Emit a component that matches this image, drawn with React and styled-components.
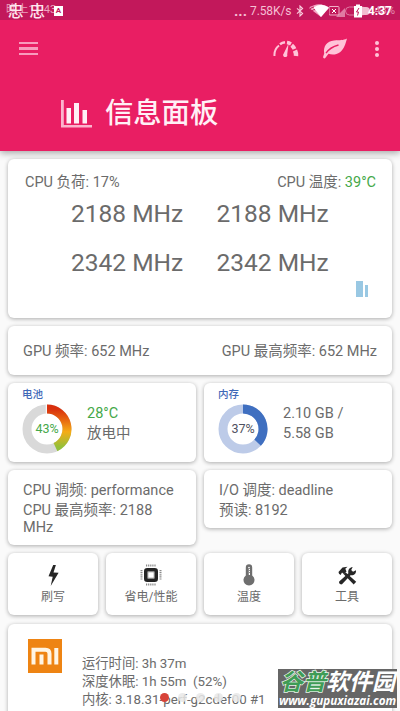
import React from 'react';
import styled, { createGlobalStyle } from 'styled-components';

const colors = {
  primary: '#e91e63',
  primaryDark: '#c2185b',
  page: '#fafafa',
  text: '#6b6b6b',
  green: '#45a849',
  blue: '#3f69b8',
  icon: '#ffc3d8',
};

const Bluetooth = () => (
  <svg width="8" height="12" viewBox="0 0 8 12" fill="none" stroke="#f9cfdf" strokeWidth="1.1">
    <path d="M1 3.3 6.6 8.4 4 11V1l2.6 2.5L1 8.7" />
  </svg>
);

const Wifi = () => (
  <svg width="20" height="13" viewBox="0 0 20 13">
    <path d="M0 4Q10-3.5 20 4L12 13Z" fill="#f4a6c3" />
    <path d="M4.5 3.5Q12-2 20 3.5L12 13Z" fill="#fff" />
    <path d="M1 5q2-2 4-2M3 7q1.500-1.500 3-1.500" stroke="#c2185b" fill="none" />
  </svg>
);

const Battery = () => (
  <svg width="42" height="14" viewBox="0 0 42 14">
    <path d="m7 13 9-9v9z" fill="#e07ba3" />
    <rect x="0" y="2.500" width="10" height="8.500" rx="1" fill="none" stroke="#f1b0c8" />
    <path d="m3 5 4 4m0-4L3 9" stroke="#fff" />
    <rect x="16.500" y="3" width="21" height="8" rx="4" fill="none" stroke="#df7aa2" />
    <path d="M33 3h4a4 4 0 0 1 0 8h-4z" fill="#f2bdd0" />
    <path d="M25 2h2V.500h4V2h2v11.500h-8z" fill="#fff" />
    <path d="m30 4-2.500 4h2l-1 3.500" stroke="#c2185b" fill="none" />
  </svg>
);

const Gauge = () => (
  <svg width="26" height="17" viewBox="0 0 26 17" fill="none" stroke={colors.icon}>
    <path d="M1.500 16A12 12 0 0 1 6 5.500" strokeWidth="2" />
    <path d="M7 4.200A11 11 0 0 1 12 2.200" strokeWidth="2.500" />
    <path d="M14 2.600A11 11 0 0 1 18 4" strokeWidth="3.500" />
    <path d="M18.700 5.300A11 11 0 0 1 21.500 9" strokeWidth="4" />
    <path d="M22 10.500A11 11 0 0 1 23 16" strokeWidth="4.500" />
    <path d="m15.600 3.500-5 10.300a2.100 2.100 0 1 0 3.600.600z" fill={colors.icon} stroke="none" />
  </svg>
);

const Leaf = () => (
  <svg width="26" height="21" viewBox="0 0 26 21">
    <path d="M2.200 15.500C1 8 5 3.200 12 2.500 18 2 21 2.500 25 .500 23.500 6 22 11 18 14.200c-4 3-8.500 2.600-11.500 1.600L3.300 20C2.500 21 .500 20 1.200 18.500Z" fill={colors.icon} />
    <path d="M4 15.200C7 10.500 11 8.500 16.500 7" fill="none" stroke={colors.primary} strokeWidth="1.300" />
  </svg>
);

const Chart = () => (
  <svg width="31" height="29" viewBox="0 0 31 29" fill="#fff0f6">
    <path d="M0 0h2.800v25H31v2.500H0z" fill="#fbb4cd" />
    <path d="M5.500 8h4.500v15.500H5.500zM13 3h5v20.500h-5zM21.500 10h4.500v13.500h-4.500z" />
  </svg>
);

const Bolt = () => (
  <svg width="11" height="22" viewBox="0 0 11 22">
    <path d="M5.200 1h2.700L5.500 8.600l5.100.200L2.700 22l2-9.300L.500 12.200z" fill="#262626" />
  </svg>
);

const Chip = () => (
  <svg width="22" height="22" viewBox="0 0 22 22">
    <path d="M6 1.500h10M6 20.500h10M1.500 6v10M20.500 6v10" stroke="#8a8a8a" strokeWidth="2" strokeDasharray="1.200 .900" />
    <rect x="5.800" y="5.800" width="10.400" height="10.400" rx="1.500" fill="#fff" stroke="#242424" strokeWidth="3.600" />
    <rect x="8" y="8" width="6" height="6" fill="#fff" stroke="#777" strokeWidth=".500" />
  </svg>
);

const Thermometer = () => (
  <svg width="12" height="22" viewBox="0 0 12 22">
    <path d="M2.800 3.500a3.200 3.200 0 0 1 6.400 0v8a5.500 5.500 0 1 1-6.400 0z" fill="#6e6e6e" />
    <path d="M5 3.500q1-1.500 2 0V11H5z" fill="#fff" />
    <path d="M6 4.500h2M6 6.500h2M6 8.500h2M5.500 4v8" stroke="#6e6e6e" strokeWidth=".800" />
  </svg>
);

const Tools = () => (
  <svg width="19" height="19" viewBox="0 0 19 19" fill="#262626">
    <path d="m7.500 6.200 10.700 9.600-2.500 2.600L5.500 8z" />
    <path d="M1 7.800.500 6 4.500 1.500 9.500.800 7.300 2.800 8.500 5.500 5.800 8 4 6.500 2.600 9z" />
    <path d="m1.200 15.600 9.200-8.400C9.600 4 11.500 1.500 14.700 1l-1.500 3 1.800 1.700 3-1.500c.500 3.300-2.500 5.800-5.500 5L4 18.300c-1.800.700-3.500-1-2.800-2.700" />
  </svg>
);

const Mi = () => (
  <svg width="34" height="34" viewBox="0 0 34 34">
    <path d="M0 0h34v34H0z" fill="#ee8413" />
    <path d="M5.500 25.500V10.700h12q4 0 4 4v10.800M13.500 15.500v10M28.300 9v16.500" fill="none" stroke="#fff5e4" strokeWidth="4" />
  </svg>
);

const BatteryRing = () => (
  <svg width="50" height="50" viewBox="0 0 50 50" fill="none" strokeWidth="9">
    <defs>
      <linearGradient id="charge" x1="0" y1="0" x2="0" y2="1">
        <stop offset="0" stopColor="#d9300d" />
        <stop offset=".300" stopColor="#e86a12" />
        <stop offset=".600" stopColor="#f5ac16" />
        <stop offset="1" stopColor="#93c03a" />
      </linearGradient>
    </defs>
    <circle cx="25" cy="25" r="20" stroke="#d9d9d9" />
    <path d="M25 5A20 20 0 0 1 33.500 43.100" stroke="url(#charge)" />
    <path d="M24.300 0v10" stroke="#fff" strokeWidth="1" />
  </svg>
);

const MemoryRing = () => (
  <svg width="50" height="50" viewBox="0 0 50 50" fill="none" strokeWidth="9">
    <circle cx="25" cy="25" r="20" stroke="#bdcbe8" />
    <path d="M25 5A20 20 0 0 1 39.600 38.700" stroke="#3f6fc0" />
  </svg>
);

const App = () => (
  <Screen>
    <GlobalStyle />
    <StatusBar>
      <Clock>晚上11:43</Clock>
      <ImeBadge>A</ImeBadge>
      <Notices>
        <span>忠</span>
        <span>忠</span>
      </Notices>
      <StatusRight>
        <Ellipsis>...</Ellipsis>
        <Speed>7.58K/s</Speed>
        <Bluetooth />
        <Wifi />
        <Battery />
        <Percent>43%</Percent>
        <Time>4:37</Time>
      </StatusRight>
    </StatusBar>
    <Header>
      <Toolbar>
        <MenuButton>
          <i />
          <i />
          <i />
        </MenuButton>
        <Actions>
          <Gauge />
          <Leaf />
          <MoreButton>
            <i />
            <i />
            <i />
          </MoreButton>
        </Actions>
      </Toolbar>
      <Title>
        <Chart />
        <h1>信息面板</h1>
      </Title>
    </Header>
    <Content>
      <CpuCard>
        <Between>
          <span>CPU 负荷: 17%</span>
          <span>
            CPU 温度: <Green>39°C</Green>
          </span>
        </Between>
        <Frequencies>
          <span>2188 MHz</span>
          <span>2188 MHz</span>
          <span>2342 MHz</span>
          <span>2342 MHz</span>
        </Frequencies>
        <LoadBars>
          <LoadBar $width={7} $height={16} />
          <LoadBar $width={3} $height={12} />
        </LoadBars>
      </CpuCard>
      <GpuCard>
        <span>GPU 频率: 652 MHz</span>
        <span>GPU 最高频率: 652 MHz</span>
      </GpuCard>
      <Columns>
        <StatCard>
          <Label>电池</Label>
          <Stat>
            <Ring $color={colors.green}>
              <BatteryRing />
              <b>43%</b>
            </Ring>
            <div>
              <Green>28°C</Green>
              <br />
              放电中
            </div>
          </Stat>
        </StatCard>
        <StatCard>
          <Label>内存</Label>
          <Stat>
            <Ring $color="#4f5260">
              <MemoryRing />
              <b>37%</b>
            </Ring>
            <div>
              2.10 GB /
              <br />
              5.58 GB
            </div>
          </Stat>
        </StatCard>
      </Columns>
      <Columns>
        <TextCard $height={75}>
          <p>CPU 调频: performance</p>
          <p>CPU 最高频率: 2188</p>
          <p>MHz</p>
        </TextCard>
        <TextCard $height={58}>
          <p>I/O 调度: deadline</p>
          <p>预读: 8192</p>
        </TextCard>
      </Columns>
      <Shortcuts>
        <Shortcut>
          <Bolt />
          <span>刷写</span>
        </Shortcut>
        <Shortcut>
          <Chip />
          <span>省电/性能</span>
        </Shortcut>
        <Shortcut>
          <Thermometer />
          <span>温度</span>
        </Shortcut>
        <Shortcut>
          <Tools />
          <span>工具</span>
        </Shortcut>
      </Shortcuts>
      <SystemCard>
        <Mi />
        <SystemText>
          <p>运行时间: 3h 37m</p>
          <p>深度休眠: 1h 55m&nbsp; (52%)</p>
          <p>内核: 3.18.31-perf-g2cdef00 #1</p>
          <p>build@mi-server1804 bj</p>
        </SystemText>
      </SystemCard>
    </Content>
    <Dots>
      <Dot $active />
      <Dot />
      <Dot />
      <Dot />
      <Dot />
    </Dots>
    <Watermark>
      <Brand>
        <em>谷普</em>软件园
      </Brand>
      <Site>www.gupuxiazai.com</Site>
    </Watermark>
  </Screen>
);

export default App;

const GlobalStyle = createGlobalStyle`
  * {
    box-sizing: border-box;
  }

  body {
    margin: 0;
    overflow: hidden;
    background: ${colors.page};
  }

  svg {
    display: block;
    flex-shrink: 0;
  }

  p {
    margin: 0;
  }
`;

const Screen = styled.div`
  position: relative;
  width: 400px;
  height: 711px;
  overflow: hidden;
  background: ${colors.page};
  color: ${colors.text};
  font: 14.5px/18px Roboto, 'Noto Sans CJK SC', sans-serif;
  white-space: nowrap;
`;

const StatusBar = styled.div`
  position: relative;
  display: flex;
  align-items: center;
  height: 20px;
  padding-left: 6px;
  background: ${colors.primaryDark};
  color: #f5bfd3;
  font-size: 12px;
`;

const Clock = styled.span`
  width: 48px;
  color: #eba3bf;
  font-size: 11.2px;
  line-height: 20px;
`;

const ImeBadge = styled.span`
  width: 9px;
  height: 10px;
  margin-top: 1px;
  background: #fff;
  color: ${colors.primaryDark};
  font: bold 8px/10px Roboto, sans-serif;
  text-align: center;
`;

const Notices = styled.div`
  position: absolute;
  top: 2px;
  left: 8px;
  display: flex;
  gap: 6px;
  color: #ffe6ef;
  font-size: 15.5px;
  font-weight: 500;
  line-height: 20px;
`;

const StatusRight = styled.div`
  position: relative;
  display: flex;
  align-items: center;
  width: 166px;
  padding-top: 1px;
  margin-left: auto;
`;

const Ellipsis = styled.span`
  width: 16px;
  font-weight: bold;
  font-size: 15px;
  line-height: 14px;
`;

const Speed = styled.span`
  width: 46px;
  font-size: 12px;
  letter-spacing: -0.1px;

  & + svg {
    margin-right: 5px;
  }
`;

const Percent = styled.span`
  position: absolute;
  right: 5px;
  color: #e38fb0;
  font-size: 11px;
`;

const Time = styled.span`
  position: absolute;
  right: 8px;
  color: #fff;
  font-size: 12px;
  font-weight: 700;
`;

const Header = styled.header`
  height: 131px;
  padding-top: 14px;
  background: ${colors.primary};
  box-shadow: 0 2px 7px rgba(0, 0, 0, 0.35);
`;

const Toolbar = styled.div`
  display: flex;
  align-items: center;
  justify-content: space-between;
  height: 29px;
  padding: 0 21px 0 19px;
`;

const MenuButton = styled.div`
  display: grid;
  gap: 3px;
  width: 19px;

  i {
    height: 2.3px;
    background: #f89bbd;
  }
`;

const Actions = styled.div`
  display: flex;
  align-items: center;
  gap: 23px;
`;

const MoreButton = styled.div`
  display: grid;
  gap: 2px;
  margin-left: 4px;

  i {
    width: 4px;
    height: 4px;
    border-radius: 50%;
    background: ${colors.icon};
  }
`;

const Title = styled.div`
  display: flex;
  align-items: center;
  gap: 13px;
  padding: 31px 0 0 61px;

  h1 {
    margin: 0;
    color: #fff0f6;
    font-size: 28.3px;
    font-weight: 500;
    line-height: 40px;
  }
`;

const Content = styled.main`
  display: grid;
  gap: 8px;
  padding: 8px;
`;

const Card = styled.section`
  border-radius: 6px;
  background: #fff;
  box-shadow: 0 1px 4px rgba(0, 0, 0, 0.32);
`;

const CpuCard = styled(Card)`
  height: 159px;
  padding: 15px 16px 0 17px;
`;

const Between = styled.div`
  display: flex;
  justify-content: space-between;
`;

const Green = styled.span`
  color: ${colors.green};
`;

const Frequencies = styled.div`
  display: grid;
  grid-template-columns: 145.5px 145px;
  grid-auto-rows: 49px;
  padding-left: 46px;
  font-size: 24.5px;
  line-height: 43px;
`;

const LoadBars = styled.div`
  display: flex;
  align-items: flex-end;
  justify-content: flex-end;
  gap: 2px;
  padding-right: 8px;
  margin-top: -9px;
`;

const LoadBar = styled.i`
  width: ${(p) => p.$width}px;
  height: ${(p) => p.$height}px;
  background: #99c8e3;
`;

const GpuCard = styled(Card)`
  display: flex;
  align-items: center;
  justify-content: space-between;
  height: 49px;
  padding: 2px 15px 0;
`;

const Columns = styled.div`
  display: grid;
  grid-template-columns: 1fr 1fr;
  gap: 8px;
  align-items: start;
`;

const StatCard = styled(Card)`
  height: 79px;
  padding: 4px 14px;
`;

const Label = styled.div`
  color: ${colors.blue};
  font-size: 10.5px;
  font-weight: 500;
  line-height: 15px;
`;

const Stat = styled.div`
  display: flex;
  gap: 15px;
  margin-top: 2px;
  line-height: 20px;
`;

const Ring = styled.div`
  position: relative;
  height: 50px;

  b {
    position: absolute;
    inset: 0;
    color: ${(p) => p.$color};
    font-size: 12.5px;
    font-weight: 400;
    line-height: 50px;
    text-align: center;
  }
`;

const TextCard = styled(Card)`
  height: ${(p) => p.$height}px;
  padding: 11px 15px;
  line-height: 20px;

  p:nth-child(3) {
    line-height: 14px;
  }
`;

const Shortcuts = styled.div`
  display: grid;
  grid-template-columns: repeat(4, 1fr);
  gap: 8px;
`;

const Shortcut = styled(Card)`
  display: grid;
  grid-template-rows: 24px 20px;
  place-items: center;
  align-content: start;
  height: 62px;
  padding-top: 10px;
  font-size: 12px;
  line-height: 20px;
`;

const SystemCard = styled(Card)`
  display: flex;
  gap: 20px;
  height: 110px;
  margin-top: 1px;
  padding: 15px 20px;
`;

const SystemText = styled.div`
  padding-top: 16px;
  font-size: 13.3px;
  line-height: 18.2px;
`;

const Dots = styled.div`
  position: absolute;
  top: 693px;
  left: 160px;
  display: flex;
  gap: 9px;
`;

const Dot = styled.i`
  width: 9px;
  height: 9px;
  border-radius: 50%;
  background: ${(p) => (p.$active ? '#d74339' : 'rgba(232, 232, 232, 0.85)')};
`;

const Watermark = styled.div`
  position: absolute;
  top: 669px;
  left: 278px;
  width: 119px;
  height: 39px;
  background: #666;
  color: #fff;
  text-align: center;
`;

const Brand = styled.div`
  height: 25px;
  font-size: 23px;
  font-style: italic;
  font-weight: 700;
  line-height: 28px;

  em {
    color: #3f9c56;
    paint-order: stroke;
    -webkit-text-stroke: 1.5px #e8f5ea;
  }
`;

const Site = styled.div`
  font: italic bold 11.7px/13px 'Open Sans', sans-serif;
`;
